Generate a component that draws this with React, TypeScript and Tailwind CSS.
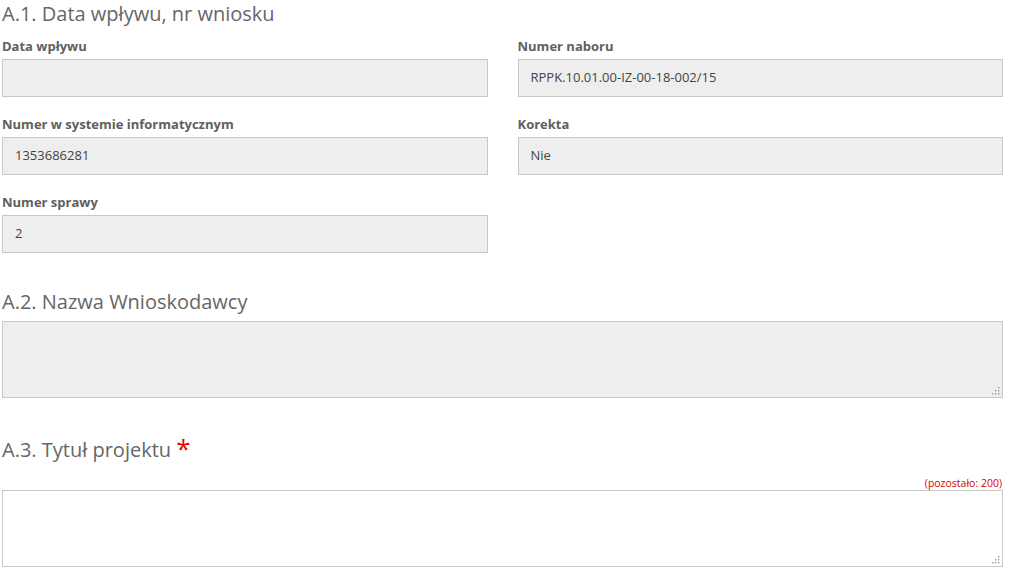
import React from 'react'

const font = { fontFamily: '"Open Sans", "Liberation Sans", sans-serif' }

function Field({ label, value }: { label: string; value?: string }) {
  return (
    <div className="flex flex-col">
      <label className="text-[13px] font-bold text-[#606060] leading-[16px] h-[16px] mb-[5px]">{label}</label>
      <div className="h-[38px] bg-[#eeeeee] border border-[#c8c8c8] px-[12px] flex items-center text-[13px] text-[#444]">
        {value}
      </div>
    </div>
  )
}

function Grip() {
  // kropki uchwytu zmiany rozmiaru
  return (
    <svg className="absolute right-[2px] bottom-[2px]" width="9" height="9" viewBox="0 0 9 9">
      <rect x="7" y="1" width="1.4" height="1.4" fill="#999" />
      <rect x="4" y="4" width="1.4" height="1.4" fill="#999" />
      <rect x="7" y="4" width="1.4" height="1.4" fill="#999" />
      <rect x="1" y="7" width="1.4" height="1.4" fill="#999" />
      <rect x="4" y="7" width="1.4" height="1.4" fill="#999" />
      <rect x="7" y="7" width="1.4" height="1.4" fill="#999" />
    </svg>
  )
}

export default function App() {
  return (
    <div className="bg-white w-[1018px] h-[585px] overflow-hidden" style={font}>
      <div className="w-[1001px] ml-[2px]">
        {/* A.1 */}
        <h2 className="text-[20px] text-[#666] leading-[26px] pt-[1px]">A.1. Data wpływu, nr wniosku</h2>
        <div className="grid grid-cols-2 gap-x-[30px] gap-y-[19px] mt-[11px]">
          <Field label="Data wpływu" />
          <Field label="Numer naboru" value="RPPK.10.01.00-IZ-00-18-002/15" />
          <Field label="Numer w systemie informatycznym" value="1353686281" />
          <Field label="Korekta" value="Nie" />
          <Field label="Numer sprawy" value="2" />
        </div>

        {/* A.2 */}
        <h2 className="text-[20px] text-[#666] leading-[26px] mt-[36px]">A.2. Nazwa Wnioskodawcy</h2>
        <div className="relative mt-[6px] h-[77px] bg-[#eeeeee] border border-[#c8c8c8]">
          <Grip />
        </div>

        {/* A.3 */}
        <h2 className="text-[20px] text-[#666] leading-[26px] h-[26px] mt-[39px]">
          A.3. Tytuł projektu <span className="text-[#e00] text-[26px] align-top leading-[22px]">*</span>
        </h2>
        <div className="text-right text-[10.5px] text-[#d00] leading-[12px] mt-[14px] pr-[1px]">(pozostało: 200)</div>
        <div className="relative mt-[1px] h-[77px] bg-white border border-[#c8c8c8]">
          <Grip />
        </div>
      </div>
    </div>
  )
}
